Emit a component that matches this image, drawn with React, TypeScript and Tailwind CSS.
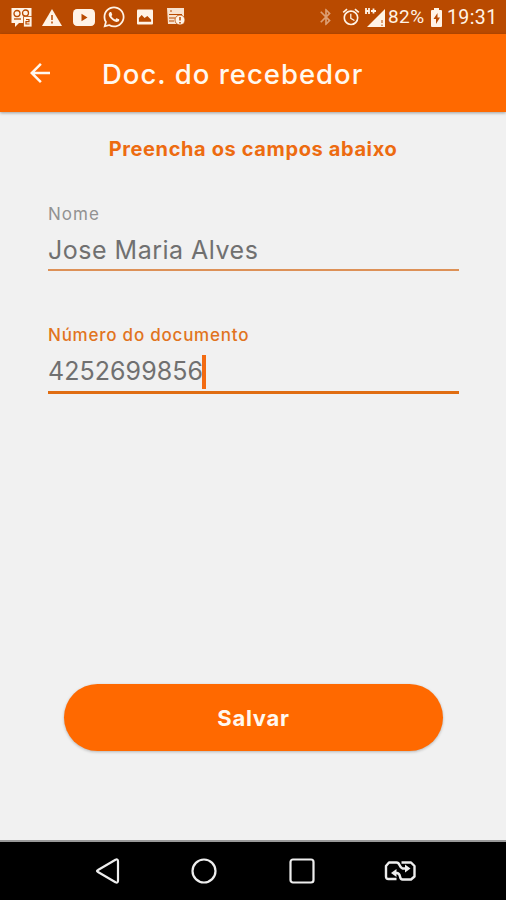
import type { ReactNode } from 'react';
import { FaWhatsapp } from 'react-icons/fa';
import { MdArrowBack, MdBluetooth, MdAlarm } from 'react-icons/md';

function StatusBar() {
  return (
    <div className="flex h-[34px] items-center justify-between bg-[#b94a00] pr-[8px] pl-[11px] text-[#fff3e6]">
      <div className="flex items-center">
        {/* Chat */}
        <svg width="22" height="20" viewBox="0 0 22 20" className="mt-[2px]">
          <path d="M.5 0h20v15H8l-4 4v-4H.5z" fill="currentColor" />
          <g fill="none" stroke="#b94a00" strokeWidth="1.3">
            <circle cx="6" cy="5.5" r="3" />
            <circle cx="14.5" cy="5" r="3" />
            <path d="M3 11h7" />
          </g>
          <path d="M12.500 8.500h8.500v10.500h-8.500z" fill="currentColor" stroke="#b94a00" strokeWidth=".8" />
          <path d="M15 11.500h3v2.200h-3V16h3.500" fill="none" stroke="#b94a00" strokeWidth="1.2" />
        </svg>
        {/* Warning */}
        <svg width="20" height="17" viewBox="0 0 20 17" className="ml-[9px]">
          <path d="M10 0l10 17H0z" fill="currentColor" />
          <path d="M10 6v5M10 12.500v2" stroke="#b94a00" strokeWidth="1.5" />
        </svg>
        {/* YouTube */}
        <svg width="22" height="17" viewBox="0 0 22 16" preserveAspectRatio="none" className="ml-[11px]">
          <rect width="22" height="16" rx="4" fill="currentColor" />
          <path d="M8.500 4.500v7L14.500 8z" fill="#b94a00" />
        </svg>
        <FaWhatsapp className="ml-[8px] h-[24px] w-[22px]" />
        {/* Gallery */}
        <svg width="16" height="16" viewBox="0 0 17 16" className="ml-[12px]">
          <rect width="17" height="16" rx="1" fill="currentColor" />
          <path d="M2 13V9l3-3 3 3 3-2 4 4v2z" fill="#b94a00" />
        </svg>
        {/* News alert */}
        <svg width="19" height="18" viewBox="0 0 19 18" className="ml-[14px]">
          <path d="M0 0h17v16H1z" fill="currentColor" opacity=".9" />
          <path d="M3 3h2M2 6.500h13M2 10h6M2 13h5" stroke="#b94a00" strokeWidth="1.2" />
          <circle cx="13" cy="12" r="5" fill="currentColor" stroke="#b94a00" strokeWidth=".8" />
          <path d="M13 9v3.500M13 14v1.500" stroke="#b94a00" strokeWidth="1.5" />
        </svg>
      </div>
      <div className="flex items-center">
        <MdBluetooth className="size-[20px] opacity-50" />
        <MdAlarm className="ml-[5px] size-[20px]" />
        {/* Signal */}
        <svg width="20" height="19" viewBox="0 0 20 19" className="ml-[4px]">
          <path d="M20 1v18H2z" fill="currentColor" />
          <path d="M1 0v6M4 0v6M1 3h3M6 3h5M8.500 .500v5" stroke="currentColor" strokeWidth="1.8" />
          <path d="M17 12v3M17 16.500V18" stroke="#b94a00" strokeWidth="1" />
        </svg>
        <span className="ml-[3px] w-[39px] pt-px font-[Roboto] text-[19px] tracking-[.4px] whitespace-nowrap">82%</span>
        {/* Battery */}
        <svg width="11" height="19" viewBox="0 0 11 19" className="ml-[4px]">
          <path d="M3 0h5v2h2a1 1 0 011 1v15a1 1 0 01-1 1H1a1 1 0 01-1-1V3a1 1 0 011-1h2z" fill="currentColor" />
          <path d="M6.500 5L2.500 11h2.500v5l4-6.500H6.500z" fill="#b94a00" />
        </svg>
        <span className="ml-[5px] w-[51px] pt-px font-[Roboto] text-[19.500px] tracking-[.4px] whitespace-nowrap">19:31</span>
      </div>
    </div>
  );
}

function AppHeader() {
  return (
    <header className="z-10 flex h-[78px] items-center bg-[#ff6900] pb-px text-[#fff8ef] shadow-[0_1px_3px_rgba(0,0,0,0.35)]">
      <button className="ml-[25px]" aria-label="Voltar">
        <MdArrowBack className="mt-px size-[30px]" />
      </button>
      <h1 className="mt-[5px] ml-[47px] text-[27.500px] font-medium tracking-[1px] whitespace-nowrap">Doc. do recebedor</h1>
    </header>
  );
}

interface FieldProps {
  label: string;
  focused?: boolean;
  children: ReactNode;
}

function Field({ label, focused = false, children }: FieldProps) {
  return (
    <div className={focused ? 'h-[69px] border-b-[3px] border-[#e06d12]' : 'h-[67px] border-b-2 border-[#dd9157]'}>
      <div
        className={
          focused
            ? 'h-[20px] text-[17px] leading-[20px] font-medium tracking-[.77px] whitespace-nowrap text-[#e1741e]'
            : 'h-[20px] text-[17px] leading-[20px] tracking-[1px] text-[#929292]'
        }
      >
        {label}
      </div>
      <div className="mt-[8px] flex h-[38px] items-center text-[25px] text-[#707070]">{children}</div>
    </div>
  );
}

function NavBar() {
  return (
    <nav className="flex h-[58px] items-center bg-black pl-[95px] text-[#eeeeee]">
      <svg width="25" height="26" viewBox="0 0 25 26" fill="none" stroke="currentColor" strokeWidth="2.2" strokeLinejoin="round">
        <path d="M20.500 1.700q2.500-1 2.500 1.500v19.600q0 2.500-2.500 1.500L3 14q-2-1 0-2z" />
      </svg>
      <svg width="26" height="26" viewBox="0 0 26 26" className="ml-[71px]" fill="none" stroke="currentColor" strokeWidth="2.2">
        <circle cx="13" cy="13" r="11.500" />
      </svg>
      <svg width="26" height="26" viewBox="0 0 26 26" className="ml-[72px]" fill="none" stroke="currentColor" strokeWidth="2.2">
        <rect x="1.500" y="1.500" width="23" height="23" rx="2.500" />
      </svg>
      <svg width="32" height="22" viewBox="0 0 32 22" className="ml-[69px]" fill="none" stroke="currentColor" strokeWidth="2.4" strokeLinejoin="round">
        <path d="M12.500 19H4.500Q2 19 2 16.500V6l3-3.500h7.500q2 0 3 2.500t3 3.500h3" />
        <path d="M17.500 2.500H27l3.500 3.500v10.500L27 19.500h-8.500q-2 0-2.500-3t-3-3.500h-2" />
        <path d="M21 4.500l5.500 4-5.500 4zM12.500 9L7 13l5.500 4z" fill="currentColor" stroke="none" />
      </svg>
    </nav>
  );
}

export default function App() {
  return (
    <div className="flex h-[900px] w-[506px] flex-col overflow-hidden bg-[#f1f1f1] font-[Inter,sans-serif]">
      <StatusBar />
      <AppHeader />
      <main className="flex flex-1 flex-col border-b-2 border-[#999999] px-[48px] pt-[24px]">
        <h2 className="text-center text-[20px] leading-[26px] font-bold tracking-[.62px] whitespace-nowrap text-[#ed6b10]">
          Preencha os campos abaixo
        </h2>
        <div className="mt-[42px] mr-[-1px] flex flex-col gap-[54px]">
          <Field label="Nome">
            <span className="tracking-[.5px]">Jose Maria Alves</span>
          </Field>
          <Field label="Número do documento" focused>
            <span className="w-[154px] tracking-[.05px] whitespace-nowrap">4252699856</span>
            <span className="h-[34px] w-[4px] bg-[#f36b12]" />
          </Field>
        </div>
        <button className="mt-[290px] mr-[15px] ml-[16px] h-[67px] rounded-full bg-[#ff6900] pt-[2px] text-[22px] font-bold tracking-[.7px] text-[#fff8ef] shadow-[0_1px_3px_rgba(0,0,0,0.25)]">
          Salvar
        </button>
      </main>
      <NavBar />
    </div>
  );
}
